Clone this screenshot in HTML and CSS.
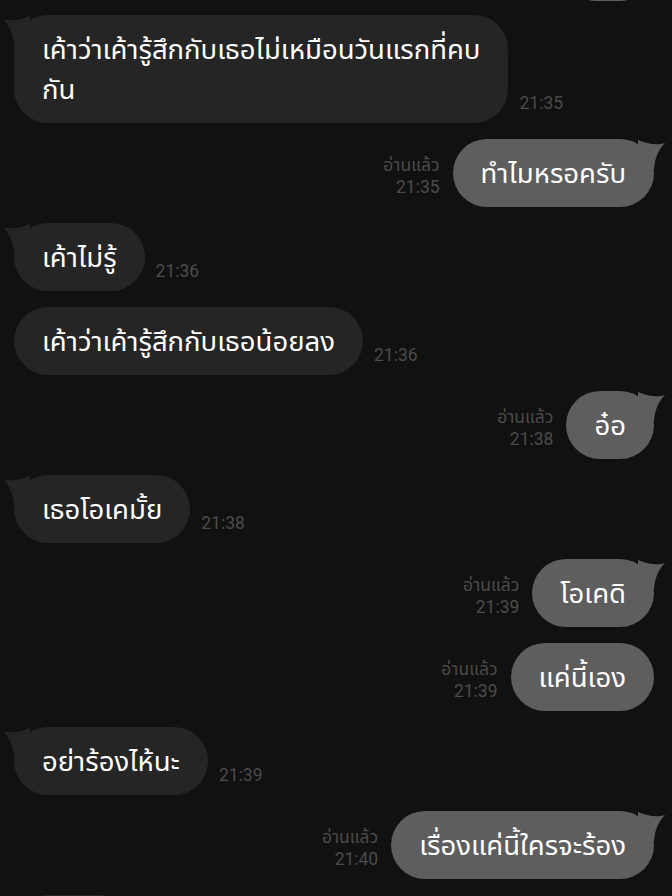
FILE: index.html
```html
<!DOCTYPE html>
<html lang="th">
<head>
  <meta charset="UTF-8">
  <meta name="viewport" content="width=device-width, initial-scale=1.0">
  <title>Chat</title>
  <link rel="stylesheet" href="styles.css">
</head>
<body>
  <div class="chat">

    <div class="row out first">
      <div class="bubble stub"></div>
    </div>

    <div class="row in">
      <div class="bubble two-line">
        <svg class="tail" viewBox="0 0 30 30"><path d="M1 4 C8 6 16 6 28 1 L28 30 L12 30 C11 18 7 10 1 4 Z"/></svg>
        เค้าว่าเค้ารู้สึกกับเธอไม่เหมือนวันแรกที่คบ<br>กัน
      </div>
      <div class="time">21:35</div>
    </div>

    <div class="row out">
      <div class="meta"><span>อ่านแล้ว</span><span>21:35</span></div>
      <div class="bubble">
        <svg class="tail" viewBox="0 0 30 30"><path d="M1 4 C8 6 16 6 28 1 L28 30 L12 30 C11 18 7 10 1 4 Z"/></svg>
        ทำไมหรอครับ
      </div>
    </div>

    <div class="row in">
      <div class="bubble">
        <svg class="tail" viewBox="0 0 30 30"><path d="M1 4 C8 6 16 6 28 1 L28 30 L12 30 C11 18 7 10 1 4 Z"/></svg>
        เค้าไม่รู้
      </div>
      <div class="time">21:36</div>
    </div>

    <div class="row in">
      <div class="bubble">เค้าว่าเค้ารู้สึกกับเธอน้อยลง</div>
      <div class="time">21:36</div>
    </div>

    <div class="row out">
      <div class="meta"><span>อ่านแล้ว</span><span>21:38</span></div>
      <div class="bubble">
        <svg class="tail" viewBox="0 0 30 30"><path d="M1 4 C8 6 16 6 28 1 L28 30 L12 30 C11 18 7 10 1 4 Z"/></svg>
        อ๋อ
      </div>
    </div>

    <div class="row in">
      <div class="bubble">
        <svg class="tail" viewBox="0 0 30 30"><path d="M1 4 C8 6 16 6 28 1 L28 30 L12 30 C11 18 7 10 1 4 Z"/></svg>
        เธอโอเคมั้ย
      </div>
      <div class="time">21:38</div>
    </div>

    <div class="row out">
      <div class="meta"><span>อ่านแล้ว</span><span>21:39</span></div>
      <div class="bubble">
        <svg class="tail" viewBox="0 0 30 30"><path d="M1 4 C8 6 16 6 28 1 L28 30 L12 30 C11 18 7 10 1 4 Z"/></svg>
        โอเคดิ
      </div>
    </div>

    <div class="row out">
      <div class="meta"><span>อ่านแล้ว</span><span>21:39</span></div>
      <div class="bubble">แค่นี้เอง</div>
    </div>

    <div class="row in">
      <div class="bubble">
        <svg class="tail" viewBox="0 0 30 30"><path d="M1 4 C8 6 16 6 28 1 L28 30 L12 30 C11 18 7 10 1 4 Z"/></svg>
        อย่าร้องไห้นะ
      </div>
      <div class="time">21:39</div>
    </div>

    <div class="row out">
      <div class="meta"><span>อ่านแล้ว</span><span>21:40</span></div>
      <div class="bubble">
        <svg class="tail" viewBox="0 0 30 30"><path d="M1 4 C8 6 16 6 28 1 L28 30 L12 30 C11 18 7 10 1 4 Z"/></svg>
        เรื่องแค่นี้ใครจะร้อง
      </div>
    </div>

    <div class="row in">
      <div class="bubble stub wide"></div>
    </div>

  </div>
</body>
</html>
```

FILE: styles.css
```css
html, body {
  margin: 0;
  height: 100%;
  overflow: hidden;
}
body {
  background-color: #111111;
  font-family: "Noto Sans Thai", "Noto Sans", Roboto, sans-serif;
  color: #ffffff;
}
.chat {
  display: flex;
  flex-direction: column;
  gap: 16px;
  padding: 0 18px 0 14px;
  margin-top: -67px;
}
.row {
  display: flex;
  align-items: flex-end;
}
.row.first {
  margin-bottom: -2px;
}
.row.in {
  gap: 11px;
}
.row.out {
  justify-content: flex-end;
  gap: 13px;
}
.bubble {
  position: relative;
  padding: 16px 28px 12px;
  font-size: 27.5px;
  line-height: 40px;
  border-radius: 34px;
  white-space: nowrap;
}
.bubble.two-line {
  padding-bottom: 12px;
}
.bubble.stub {
  width: 36px;
  height: 40px;
}
.bubble.stub.wide {
  width: 64px;
}
.in .bubble {
  background-color: #252525;
}
.out .bubble {
  background-color: #5e5e5e;
}
.tail {
  position: absolute;
  top: 0;
  width: 30px;
  height: 30px;
}
.in .tail {
  left: -12px;
  fill: #252525;
}
.out .tail {
  right: -12px;
  fill: #5e5e5e;
  transform: scaleX(-1);
}
.time,
.meta {
  font-family: Roboto, "Noto Sans Thai", sans-serif;
  font-size: 17.5px;
  line-height: 22px;
  color: #4b4b4b;
}
.time {
  margin-bottom: 9px;
}
.meta {
  display: flex;
  flex-direction: column;
  align-items: flex-end;
  margin-bottom: 9px;
}
```
